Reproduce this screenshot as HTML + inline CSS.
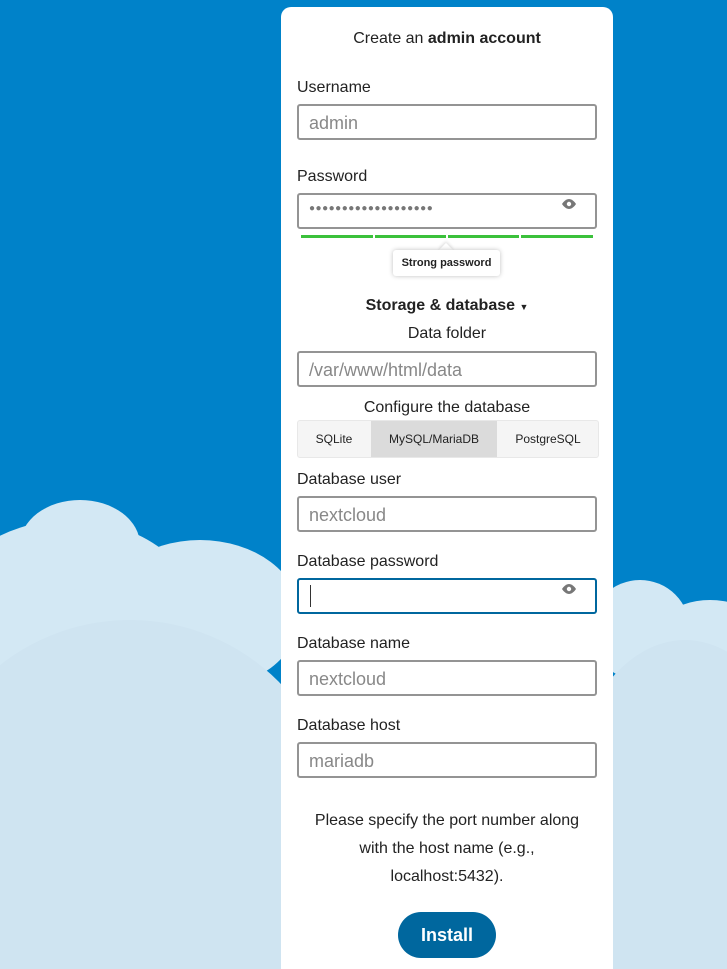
<!DOCTYPE html>
<html><head><meta charset="utf-8"><style>
html,body{margin:0;width:727px;height:969px;overflow:hidden}
body{background:#0082c9;font-family:"Liberation Sans","DejaVu Sans",sans-serif;position:relative}
.clw{position:absolute;left:0;top:0;width:727px;height:969px;overflow:hidden}
.cl{position:absolute;border-radius:50%;background:#d3e8f4}
.card{position:absolute;left:281px;top:7px;width:332px;height:962px;background:#fff;border-radius:10px 10px 0 0;color:#222}
.t{position:absolute;left:0;width:332px;text-align:center;font-size:16px}
.l{position:absolute;left:16px;font-size:16px}
.in{position:absolute;left:16px;width:296px;height:32px;border:2px solid #949494;border-radius:3px;box-sizing:content-box}
.in span{position:absolute;left:10px;top:7px;font-size:18px;color:#888}
.eye{position:absolute;right:18px;top:4px;width:16px;height:10px}
</style></head><body>
<div class="clw">
<div class="cl" style="left:-60px;top:520px;width:260px;height:200px"></div>
<div class="cl" style="left:20px;top:500px;width:120px;height:90px"></div>
<div class="cl" style="left:100px;top:540px;width:200px;height:150px"></div>
<div class="cl" style="left:-80px;top:620px;width:420px;height:420px;background:#cfe4f1"></div>
<div class="cl" style="left:590px;top:580px;width:100px;height:100px"></div>
<div class="cl" style="left:640px;top:600px;width:140px;height:120px"></div>
<div class="cl" style="left:560px;top:640px;width:250px;height:400px;background:#cfe4f1"></div>
</div>
<div class="card">
<div class="t" style="top:23px">Create an <b>admin account</b></div>
<div class="l" style="top:72px">Username</div>
<div class="in" style="top:97px"><span>admin</span></div>
<div class="l" style="top:161px">Password</div>
<div class="in" style="top:186px"><span style="top:8px;letter-spacing:0.5px;color:#777;font-size:10px">●●●●●●●●●●●●●●●●●●●</span>
<svg class="eye" viewBox="0 0 16 10"><path d="M8 0C4 0 1 5 1 5s3 5 7 5 7-5 7-5-3-5-7-5z" fill="#777"/><circle cx="8" cy="5" r="2.2" fill="#fff"/></svg></div>
<div style="position:absolute;left:20px;top:228px;width:72px;height:3px;background:#3bc13b"></div>
<div style="position:absolute;left:94px;top:228px;width:71px;height:3px;background:#3bc13b"></div>
<div style="position:absolute;left:167px;top:228px;width:71px;height:3px;background:#3bc13b"></div>
<div style="position:absolute;left:240px;top:228px;width:72px;height:3px;background:#3bc13b"></div>
<div style="position:absolute;left:160px;top:238px;width:10px;height:10px;background:#fff;transform:rotate(45deg);box-shadow:-1px -1px 3px rgba(0,0,0,.15)"></div>
<div style="position:absolute;left:112px;top:243px;width:107px;height:26px;background:#fff;border-radius:3px;box-shadow:0 0 5px rgba(0,0,0,.25);font-size:11px;font-weight:bold;text-align:center;line-height:26px">Strong password</div>
<div class="t" style="top:290px;font-weight:bold">Storage &amp; database <span style="font-size:9px">▼</span></div>
<div class="t" style="top:318px">Data folder</div>
<div class="in" style="top:344px"><span>/var/www/html/data</span></div>
<div class="t" style="top:392px">Configure the database</div>
<div style="position:absolute;left:16px;top:413px;width:300px;height:36px;background:#f5f5f5;border:1px solid #e8e8e8;border-radius:3px;font-size:12px">
<div style="position:absolute;left:0;width:72px;text-align:center;line-height:36px">SQLite</div>
<div style="position:absolute;left:73px;width:126px;height:36px;background:#dbdbdb;text-align:center;line-height:36px">MySQL/MariaDB</div>
<div style="position:absolute;left:200px;width:100px;text-align:center;line-height:36px">PostgreSQL</div>
</div>
<div class="l" style="top:464px">Database user</div>
<div class="in" style="top:489px"><span>nextcloud</span></div>
<div class="l" style="top:546px">Database password</div>
<div class="in" style="top:571px;border-color:#00679e"><div style="position:absolute;left:11px;top:5px;width:1px;height:22px;background:#333"></div>
<svg class="eye" viewBox="0 0 16 10"><path d="M8 0C4 0 1 5 1 5s3 5 7 5 7-5 7-5-3-5-7-5z" fill="#777"/><circle cx="8" cy="5" r="2.2" fill="#fff"/></svg></div>
<div class="l" style="top:628px">Database name</div>
<div class="in" style="top:653px"><span>nextcloud</span></div>
<div class="l" style="top:710px">Database host</div>
<div class="in" style="top:735px"><span>mariadb</span></div>
<div class="t" style="top:800px;line-height:28px;padding:0 20px;box-sizing:border-box">Please specify the port number along with the host name (e.g., localhost:5432).</div>
<div style="position:absolute;left:117px;top:905px;width:98px;height:46px;border-radius:23px;background:#00679e;color:#fff;font-weight:bold;font-size:18px;text-align:center;line-height:46px">Install</div>
</div>
</body></html>
